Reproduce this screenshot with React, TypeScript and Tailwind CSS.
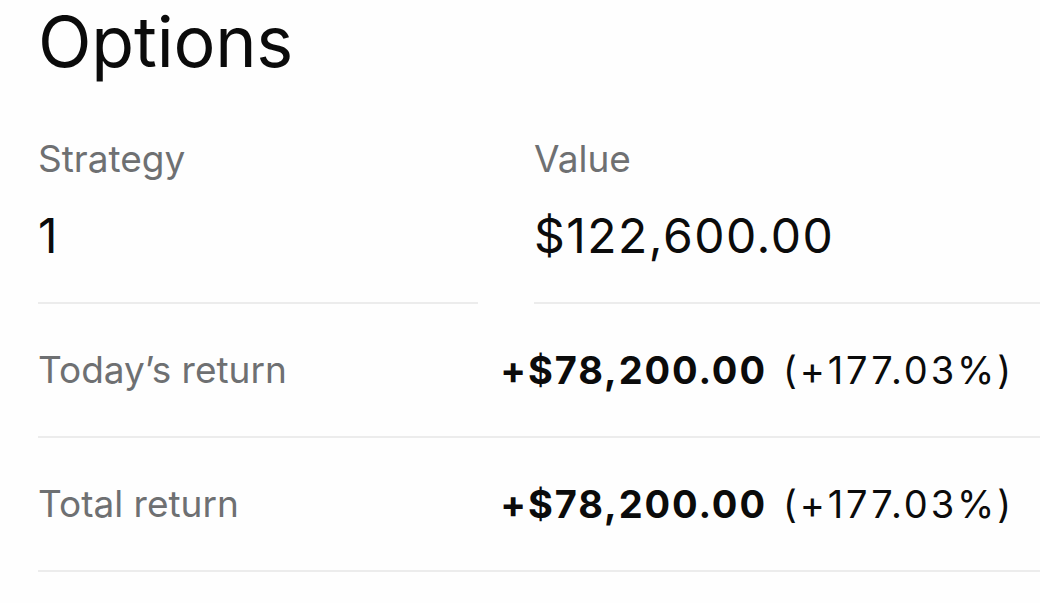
export default function App() {
  const rows = [
    { label: 'Today\u2019s return', amount: '+$78,200.00', pct: '(+177.03%)' },
    { label: 'Total return', amount: '+$78,200.00', pct: '(+177.03%)' },
  ];

  return (
    <div className="w-[1040px] h-[603px] overflow-hidden bg-[#fefefe] pl-[38px] font-['Inter',sans-serif] text-[#0b0b0b]">
      <h1 className="pt-[2px] text-[70px] leading-[80px] tracking-[-0.2px]">Options</h1>

      {/* Strategy / Value */}
      <div className="mt-[55px] grid grid-cols-[440px_1fr] gap-x-[56px]">
        <div className="border-b-2 border-[#ececec] pb-[41px]">
          <div className="text-[37px] leading-[44px] text-[#6e7072]">Strategy</div>
          <div className="mt-[30px] text-[48px] leading-[50px]">1</div>
        </div>
        <div className="border-b-2 border-[#ececec] pb-[41px]">
          <div className="text-[37px] leading-[44px] text-[#6e7072]">Value</div>
          <div className="mt-[30px] text-[48px] leading-[50px] tracking-[1.5px]">$122,600.00</div>
        </div>
      </div>

      {/* Returns */}
      {rows.map((r) => (
        <div
          key={r.label}
          className="flex h-[134px] items-center justify-between border-b-2 border-[#ececec] pr-[26px]"
        >
          <span className="text-[37px] text-[#6e7072]">{r.label}</span>
          <span className="text-[38px]">
            <span className="font-bold tracking-[1.9px]">{r.amount}</span>
            <span className="ml-[16px] tracking-[2.9px]">{r.pct}</span>
          </span>
        </div>
      ))}
    </div>
  );
}
